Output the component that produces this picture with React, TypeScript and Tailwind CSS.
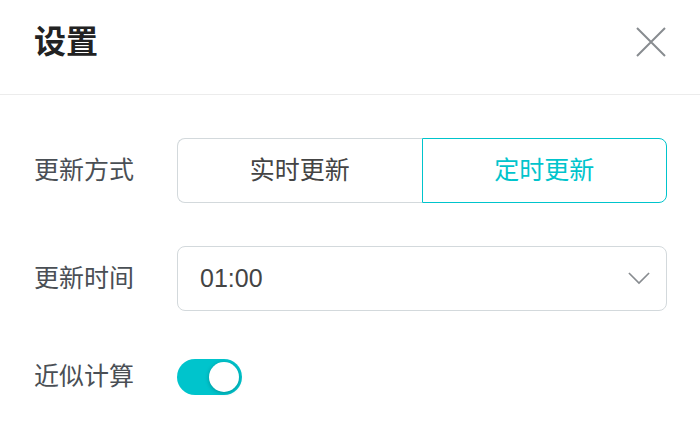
import { useState } from "react";

const font = { fontFamily: '"Liberation Sans", "Noto Sans CJK SC", sans-serif' };

export default function App() {
  const [mode, setMode] = useState<"realtime" | "timed">("timed");
  const [approx, setApprox] = useState(true);

  return (
    <div className="w-[700px] h-[448px] bg-white text-[#4a4f55]" style={font}>
      <div className="h-[95px] flex items-start justify-between pl-[34px] pr-[34px] pt-[23px] border-b border-[#ececec]">
        <h1 className="text-[32px] leading-[38px] font-bold text-[#222]">设置</h1>
        <button className="mt-[4px] w-[30px] h-[30px] text-[#888c90]">
          <svg viewBox="0 0 30 30" width="30" height="30" fill="none" stroke="currentColor" strokeWidth="2">
            <path d="M1 1 L29 29 M29 1 L1 29" />
          </svg>
        </button>
      </div>

      <div className="pl-[34px] pr-[33px] pt-[43px]">
        <div className="flex items-center h-[65px]">
          <div className="w-[143px] text-[25px]">更新方式</div>
          <div className="flex flex-1 h-full">
            <button
              onClick={() => setMode("realtime")}
              className={
                mode === "realtime"
                  ? "flex-1 rounded-l-[8px] border border-[#00c4cc] text-[#00c4cc] text-[25px]"
                  : "flex-1 rounded-l-[8px] border border-r-0 border-[#d3d9dc] text-[#444] text-[25px]"
              }
            >
              实时更新
            </button>
            <button
              onClick={() => setMode("timed")}
              className={
                mode === "timed"
                  ? "flex-1 rounded-r-[8px] border border-[#00c4cc] text-[#00c4cc] text-[25px]"
                  : "flex-1 rounded-r-[8px] border border-l-0 border-[#d3d9dc] text-[#444] text-[25px]"
              }
            >
              定时更新
            </button>
          </div>
        </div>

        <div className="flex items-center h-[65px] mt-[43px]">
          <div className="w-[143px] text-[25px]">更新时间</div>
          <div className="flex flex-1 h-full items-center justify-between rounded-[8px] border border-[#d3d9dc] pl-[22px] pr-[16px]">
            <span className="text-[25px] text-[#444]">01:00</span>
            <svg viewBox="0 0 24 14" width="22" height="13" fill="none" stroke="#888c90" strokeWidth="1.8">
              <path d="M1 1 L12 12 L23 1" />
            </svg>
          </div>
        </div>

        <div className="flex items-center h-[65px] mt-[33px]">
          <div className="w-[143px] text-[25px]">近似计算</div>
          <button
            onClick={() => setApprox(!approx)}
            className={
              approx
                ? "relative w-[65px] h-[36px] rounded-full bg-[#00c4cc]"
                : "relative w-[65px] h-[36px] rounded-full bg-[#d3d9dc]"
            }
          >
            <span
              className={
                approx
                  ? "absolute top-[3px] right-[3px] w-[30px] h-[30px] rounded-full bg-white shadow-[0_1px_4px_rgba(0,0,0,0.25)]"
                  : "absolute top-[3px] left-[3px] w-[30px] h-[30px] rounded-full bg-white shadow-[0_1px_4px_rgba(0,0,0,0.25)]"
              }
            />
          </button>
        </div>
      </div>
    </div>
  );
}
